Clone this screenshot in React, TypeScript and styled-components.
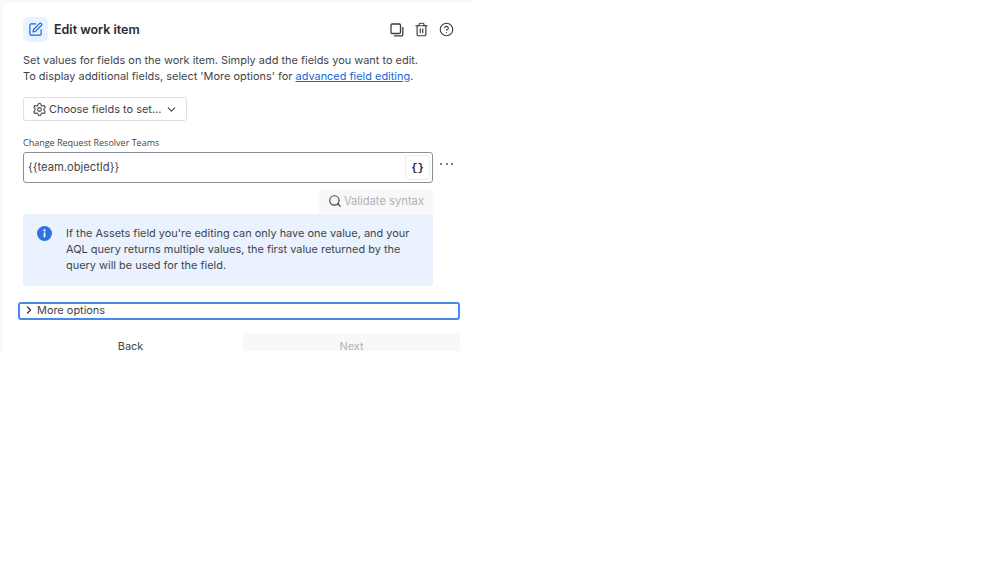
import React from 'react';
import styled, { createGlobalStyle } from 'styled-components';
import { ChevronDown, ChevronRight, CircleHelp, Search, Settings, SquarePen, Trash2 } from 'lucide-react';

const GlobalStyle = createGlobalStyle`
  html, body {
    margin: 0;
    padding: 0;
    background: #fff;
    font-family: Inter, "Liberation Sans", sans-serif;
    color: #292a2e;
  }
`;

const Frame = styled.div`
  width: 472px;
  height: 351px;
  box-sizing: border-box;
  padding: 3px 0 0 3px;
  background: #f8f8f8;
  overflow: hidden;
`;

const Panel = styled.div`
  height: 400px;
  box-sizing: border-box;
  padding: 14px 13px 0 15px;
  background: #fff;
  border-radius: 4px 0 0 0;
`;

const Header = styled.div`
  display: flex;
  align-items: center;
  padding-left: 5px;
  padding-right: 5px;
  height: 25px;
`;

const HeaderIcon = styled.div`
  width: 25px;
  height: 25px;
  border-radius: 6px;
  background: #e9f2fe;
  color: #1868db;
  display: flex;
  align-items: center;
  justify-content: center;
  margin-right: 6px;
`;

const Title = styled.h1`
  flex: 1;
  margin: 0;
  font-size: 12.5px;
  font-weight: 600;
  color: #292a2e;
`;

const HeaderActions = styled.div`
  display: flex;
  align-items: center;
  gap: 10px;
  color: #3b3d42;
`;

const Description = styled.p`
  margin: 10px 0 0 5px;
  font-size: 10.95px;
  line-height: 16px;
  color: #42454c;
  white-space: nowrap;
`;

const DocLink = styled.a`
  color: #1868db;
  text-decoration: underline;
`;

const ChooseButton = styled.button`
  display: flex;
  align-items: center;
  margin: 13px 0 0 5px;
  width: 164px;
  height: 24px;
  box-sizing: border-box;
  padding: 0 0 0 8px;
  background: #fff;
  border: 1px solid #dcdfe4;
  border-radius: 3px;
  font: inherit;
  font-size: 10.95px;
  color: #42454c;
  gap: 2px;
  white-space: nowrap;
`;

const FieldLabel = styled.label`
  display: block;
  margin: 15px 0 0 5px;
  font-family: "Open Sans", sans-serif;
  font-size: 9px;
  line-height: 13px;
  color: #42454c;
`;

const FieldRow = styled.div`
  position: relative;
  display: flex;
  align-items: center;
  margin: 3px 0 0 5px;
  width: 410px;
  height: 31px;
  box-sizing: border-box;
  padding: 0 2px 0 4px;
  border: 1px solid #8c8f97;
  border-radius: 3px;
`;

const FieldValue = styled.span`
  flex: 1;
  padding-bottom: 2px;
  font-size: 11.2px;
  color: #42454c;
`;

const SmartValueButton = styled.div`
  width: 25px;
  height: 25px;
  box-sizing: border-box;
  border: 1px solid #ebecf0;
  border-radius: 3px;
  display: flex;
  align-items: center;
  justify-content: center;
  font-family: "Liberation Mono", monospace;
  font-size: 10.5px;
  font-weight: 700;
  color: #292a2e;
`;

const MoreButton = styled.div`
  position: absolute;
  left: 416px;
  top: 10px;
  display: flex;
  gap: 3.5px;
`;

const Dot = styled.span`
  width: 2px;
  height: 2px;
  border-radius: 50%;
  background: #505258;
`;

const ValidateRow = styled.div`
  display: flex;
  justify-content: flex-end;
  margin: 6px 0 0 5px;
  width: 410px;
`;

const ValidateButton = styled.div`
  display: flex;
  align-items: center;
  gap: 2px;
  height: 24px;
  box-sizing: border-box;
  padding: 0 9px;
  background: #f8f8f8;
  font-size: 11.2px;
  color: #b0b2b8;
`;

const Notice = styled.div`
  display: flex;
  margin: 1px 0 0 5px;
  width: 410px;
  height: 72px;
  box-sizing: border-box;
  padding: 11px 12px 0 14px;
  background: #e9f2fe;
  border-radius: 3px;
`;

const NoticeIcon = styled.div`
  width: 15px;
  height: 15px;
  margin: 1px 14px 0 0;
  border-radius: 50%;
  background: #2f73e0;
  flex-shrink: 0;
  display: flex;
  align-items: center;
  justify-content: center;
`;

const NoticeText = styled.p`
  margin: 0;
  font-size: 10.95px;
  line-height: 16px;
  color: #42454c;
  white-space: nowrap;
`;

const MoreOptions = styled.div`
  display: flex;
  align-items: center;
  margin: 16px 0 0 0;
  width: 442px;
  height: 18px;
  box-sizing: border-box;
  padding: 0 0 2px 3px;
  border: 2px solid #4688ec;
  border-radius: 3px;
  font-size: 10.95px;
  color: #42454c;
  gap: 2px;
`;

const Footer = styled.div`
  display: grid;
  grid-template-columns: 225px 217px;
  margin-top: 14px;
`;

const FooterButton = styled.div<{ $disabled?: boolean }>`
  height: 32px;
  box-sizing: border-box;
  padding-top: 4px;
  text-align: center;
  font-size: 10.95px;
  line-height: 16px;
  border-radius: 3px;
  color: ${(p) => (p.$disabled ? '#b0b2b8' : '#42454c')};
  background: ${(p) => (p.$disabled ? '#f8f8f8' : 'transparent')};
`;

const CopyIcon = () => (
  <svg width="14" height="14" viewBox="0 0 14 14" fill="none" stroke="currentColor">
    <rect x="1" y="1" width="9.5" height="9.5" rx="1.2" strokeWidth="1.3" />
    <path d="M12.8 4v7.6a1.2 1.2 0 0 1-1.2 1.2H4" strokeWidth="1.3" />
  </svg>
);

const InfoGlyph = () => (
  <svg width="15" height="15" viewBox="0 0 15 15" fill="#fff">
    <rect x="6.6" y="6.5" width="1.8" height="4.8" rx="0.4" />
    <circle cx="7.5" cy="4.4" r="1.1" />
  </svg>
);

export default function App() {
  return (
    <Frame>
      <GlobalStyle />
      <Panel>
        <Header>
          <HeaderIcon>
            <SquarePen size={15} strokeWidth={1.9} />
          </HeaderIcon>
          <Title>Edit work item</Title>
          <HeaderActions>
            <CopyIcon />
            <Trash2 size={15} strokeWidth={1.9} />
            <CircleHelp size={15} strokeWidth={1.8} />
          </HeaderActions>
        </Header>
        <Description>
          Set values for fields on the work item. Simply add the fields you want to edit.
          <br />
          To display additional fields, select 'More options' for <DocLink href="#">advanced field editing</DocLink>.
        </Description>
        <ChooseButton>
          <Settings size={15} strokeWidth={1.7} />
          Choose fields to set...
          <ChevronDown size={13} strokeWidth={2} style={{ marginLeft: 2 }} />
        </ChooseButton>
        <FieldLabel>Change Request Resolver Teams</FieldLabel>
        <FieldRow>
          <FieldValue>{'{{team.objectId}}'}</FieldValue>
          <SmartValueButton>{'{}'}</SmartValueButton>
          <MoreButton>
            <Dot />
            <Dot />
            <Dot />
          </MoreButton>
        </FieldRow>
        <ValidateRow>
          <ValidateButton>
            <Search size={14} strokeWidth={2} color="#42454c" />
            Validate syntax
          </ValidateButton>
        </ValidateRow>
        <Notice>
          <NoticeIcon>
            <InfoGlyph />
          </NoticeIcon>
          <NoticeText>
            If the Assets field you're editing can only have one value, and your
            <br />
            AQL query returns multiple values, the first value returned by the
            <br />
            query will be used for the field.
          </NoticeText>
        </Notice>
        <MoreOptions>
          <ChevronRight size={12} strokeWidth={2.4} color="#292a2e" />
          More options
        </MoreOptions>
        <Footer>
          <FooterButton>Back</FooterButton>
          <FooterButton $disabled>Next</FooterButton>
        </Footer>
      </Panel>
    </Frame>
  );
}
